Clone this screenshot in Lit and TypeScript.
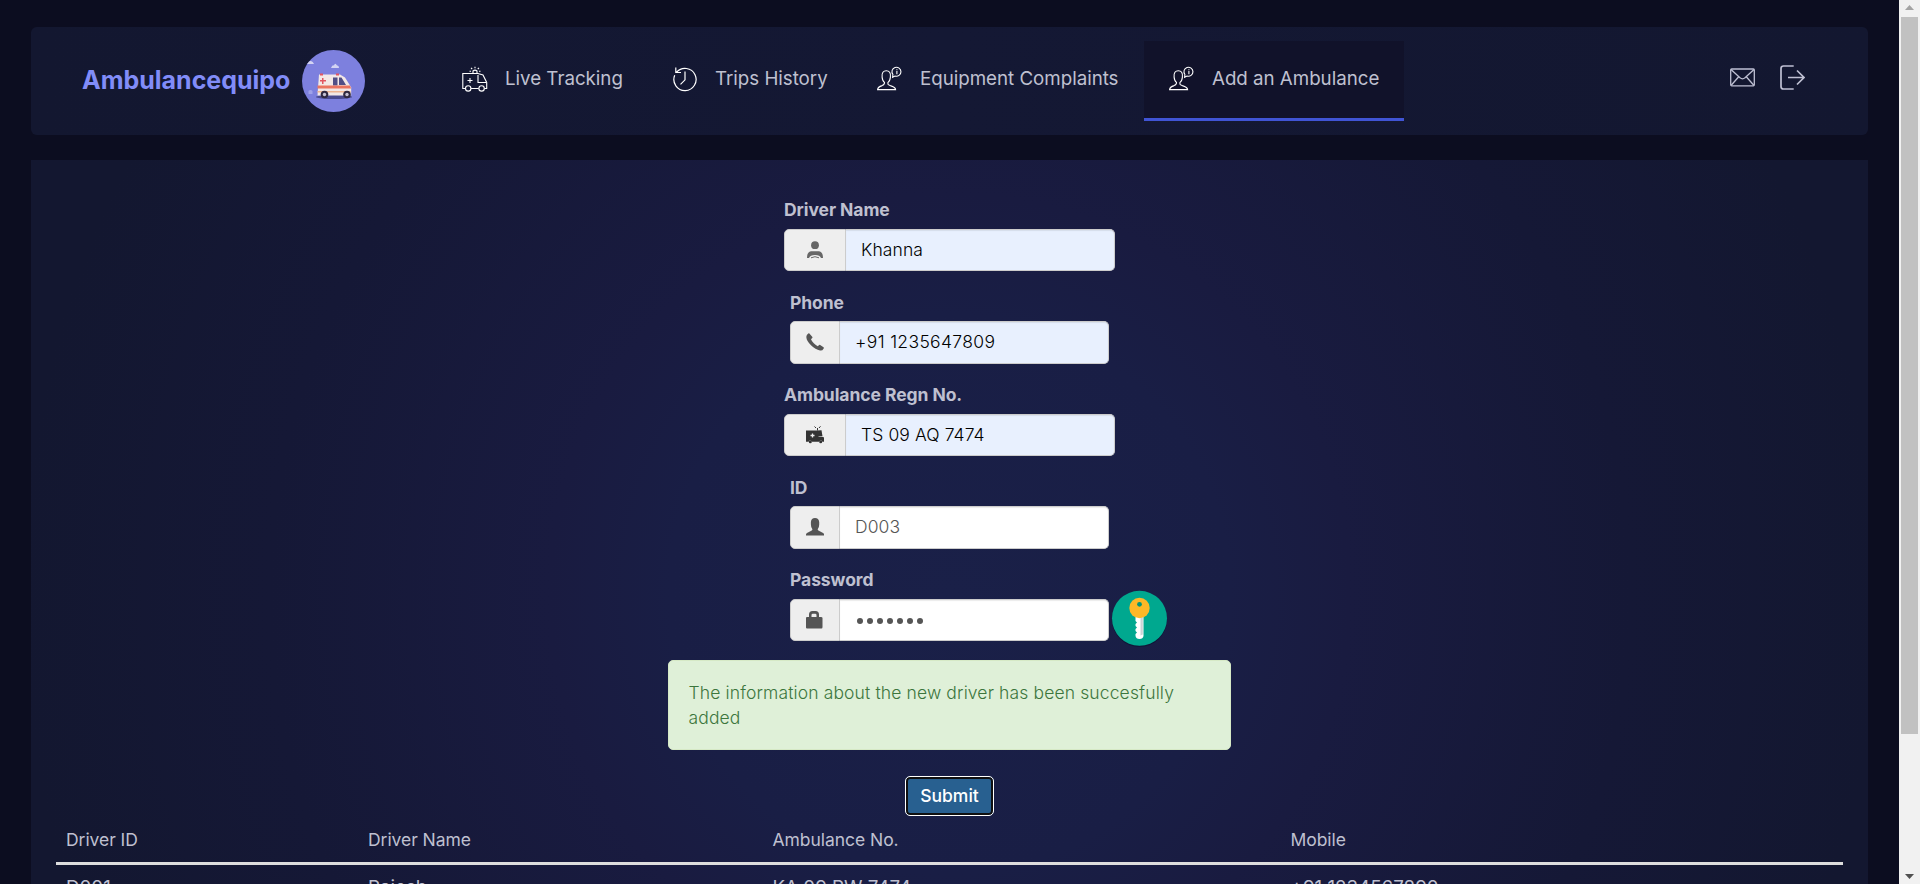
import { LitElement, html, css, svg } from "lit";
import { customElement } from "lit/decorators.js";
import { classMap } from "lit/directives/class-map.js";

const ambulance = html`<svg class="ic" viewBox="0 0 26 30" fill="none" stroke="#fff" stroke-width="1.1">
  <path d="M3.500 22.500H.8V7.500H16l5 1.500 3.700 7.500v6h-2.200M9 22.500h7.700"/>
  <circle cx="6.200" cy="22.400" r="2.700"/><circle cx="19.600" cy="22.400" r="2.700"/>
  <path d="M8 12v5M5.500 14.500h5M16 9v7.500h8M11 7.300V5q2-1.800 4 0v2.300M13 .8v1.500M9 1.800l1.200 1.200M17 1.800l-1.200 1.200M7.500 5.300h1.500M17 5.300h1.500"/></svg>`;
const clock = html`<svg class="ic" viewBox="0 0 26 30" fill="none" stroke="#fff" stroke-width="1.2">
  <path d="M4.600 6.200A11.100 11.100 0 1 1 2.700 9.300M3.800 1.500V6.500H9M13 5.500v8.300L8.500 18.300"/></svg>`;
const person = html`<svg class="ic" viewBox="0 0 26 30" fill="none" stroke="#fff" stroke-width="1.1">
  <path d="M.6 23.600q.2-2.700 4.500-4 2.600-.9 2.400-3.200c-1.600-1-2.200-3.300-2.400-5.300-.5-4.500 1.300-6.300 4.200-6.300s4.600 1.800 4.100 6.300c-.2 2-.8 4.300-2.400 5.300-.3 2.300-.1 2.300 2.300 3.200 4.800 1.400 5.200 2.700 5.300 4z"/>
  <path d="M15.600 11.300l.3-2.800A4.500 4.500 0 1 1 18 10zM19.900 2.900v.9M19.900 4.800v3.400"/></svg>`;

const logo = html`<svg class="logo" viewBox="0 0 63 62">
  <ellipse cx="31.500" cy="31" rx="31.500" ry="31" fill="#7d80de"/>
  <path d="M6 13q1-2.500 3-2t3 3H5zM29.500 17q1-2.500 2.500-1.500 1-3.500 3 0 2-.5 2 2.500h-8z" fill="#d3d4f3"/>
  <path d="M6.500 41q2-2 4 0v3h-4zM10 46h2" fill="#a0a2e9"/>
  <ellipse cx="32" cy="47" rx="18" ry="2" fill="#4a4a8e"/>
  <path d="M17 24.500h21l5 3 5 8 1.200 2v8H15.500z" fill="#f3e8e6"/>
  <path d="M31 27.500h4.500v8H31zM37 27.500h2.500l4.500 7.500h-7z" fill="#514f86"/>
  <path d="M15.500 35.500H48l1.200 3H15.500z" fill="#ea7460"/><path d="M15.500 41h33v1.500h-33z" fill="#efb490"/>
  <path d="M18 23.500h3v2h-3zM34 23.500h3v2h-3zM20 28h1.500v2H24v1.500h-2.500V34H20v-2.500h-2V30h2z" fill="#e25560"/>
  <circle cx="22.500" cy="44.500" r="3.800" fill="#30293f"/><circle cx="45" cy="44.500" r="3.800" fill="#30293f"/>
  <circle cx="22.500" cy="44.500" r="1.700" fill="#c6c1d2"/><circle cx="45" cy="44.500" r="1.700" fill="#c6c1d2"/></svg>`;

const glyphs = {
  driver: svg`<circle cx="9" cy="4.200" r="3.900" fill="#666"/><path d="M1 17q0-6 4-6.700h8q4 .7 4 6.700h-2q-1-3-6-3t-6 3z" fill="#666"/><path d="M5 16.800q4-2.200 8 0" fill="none" stroke="#666"/>`,
  phone: svg`<path d="M3.400.5l3 3.400q.4.500-.2 1.100L5 6.200q.7 2 2.800 4t4 3.100l1.300-1.200q.6-.5 1.100 0l3.300 2.200q.6.500.2 1.100-1.400 2.600-3.700 2.100Q9.500 16.800 5 12.300T.4 4.500Q0 1.800 2.300.4q.6-.4 1.100.1z" fill="#555"/>`,
  van: svg`<path d="M0 4.500h10.500V4.500l5-.3 1 6h-4v.5l5 .3.500 1v3.700h-1.500q-1.500-3-3.500 0H6q-2-3-3.500 0H0z" fill="#333"/><circle cx="4.300" cy="15.700" r="1.500" fill="#333"/><circle cx="14.700" cy="15.700" r="1.500" fill="#333"/><path d="M11.500 4.500V2M8.500.5l1.500 1.500M14.500.3l-1.500 1.700" stroke="#333"/><path d="M6.500 7.500v4M4.500 9.500h4" stroke="#eee" stroke-width="1.300"/>`,
  user: svg`<path d="M0 17.500v-1q0-1 1-1.500l4.700-2.500q.7-.4.700-1.200Q4.900 9.500 4.900 6.500V4Q5.200 0 9 0t4.200 4v2.500q0 3-1.500 4.800 0 .8.700 1.200l4.700 2.500q1 .5 1 1.500v1z" fill="#555"/>`,
  lock: svg`<path d="M3 6V3.500Q3 0 6.500 0h3Q13 0 13 3.500V6h2q1.500 0 1.500 1v9q0 1.500-1 1.500H1q-1 0-1-1V7q0-1 1-1zm2.500 0h5V4q0-1.300-1.300-1.300H6.800Q5.500 2.700 5.500 4z" fill="#555"/>`,
};

const nav = [
  { text: "Live Tracking", icon: ambulance, cls: "n1" },
  { text: "Trips History", icon: clock, cls: "n2" },
  { text: "Equipment Complaints", icon: person, cls: "n3" },
  { text: "Add an Ambulance", icon: person, cls: "active" },
];
const fields = [
  { label: "Driver Name", value: "Khanna", g: glyphs.driver, wide: true, fill: true },
  { label: "Phone", value: "+91 1235647809", g: glyphs.phone, fill: true, tel: true },
  { label: "Ambulance Regn No.", value: "TS 09 AQ 7474", g: glyphs.van, wide: true, fill: true },
  { label: "ID", value: "D003", g: glyphs.user },
  { label: "Password", value: "", g: glyphs.lock, secret: true },
];

@customElement("app-root")
export class AppRoot extends LitElement {
  static styles = css`
    :host { display: flex; width: 1920px; height: 884px; overflow: hidden; font-family: Inter, sans-serif; font-size: 17.5px; line-height: 25px; color: #bfc0d0; }
    * { box-sizing: border-box; }
    svg { display: block; flex: none; }
    .page { width: 1899px; height: 884px; overflow: hidden; padding: 27px 31px 0; background: #0c0d20; }
    .bar { height: 108px; border-radius: 6px; background: linear-gradient(90deg, #131730, #141834 50%, #131730); display: flex; padding: 14px 63px 0 51px; align-items: flex-start; }
    .brand { display: flex; width: 355px; padding-top: 9px; align-items: center; font-size: 25px; font-weight: 700; color: #818cf8; }
    .brand span { width: 220px; white-space: nowrap; padding-bottom: 2px; }
    .logo { width: 63px; height: 62px; }
    .item { height: 80px; display: flex; padding: 0 25px 0 25px; border-bottom: 3px solid transparent; font-size: 18.750px; letter-spacing: -.03px; white-space: nowrap; }
    .item span { padding: 25px 0 0 17px; }
    .n1 { width: 210px; } .n2 { width: 205px; } .n3 { width: 292px; }
    .active { width: 260px; background: #11122a; border-color: #4054d4; }
    .ic { width: 26px; height: 30px; margin-top: 25px; }
    .tools { margin-left: auto; display: flex; gap: 25px; padding-top: 24px; }
    .panel { margin-top: 25px; height: 724px; padding: 0 25px; background: radial-gradient(circle at 50% 60%, #1a2048 0, #191e45 280px, #191b40 400px, #151836 680px, #131730 930px); display: flex; flex-direction: column; }
    .form { flex: none; display: flex; flex-direction: column; align-items: center; padding-top: 36px; }
    .field { width: 319px; height: 92.5px; }
    .field.wide { width: 331px; }
    .label { font-weight: 700; height: 32.500px; padding-top: 1px; white-space: nowrap; letter-spacing: -.07px; }
    .row { display: flex; height: 42.500px; position: relative; }
    .addon { width: 50px; border: 1px solid #ccc; border-radius: 5px 0 0 5px; background: #eee; display: flex; align-items: center; justify-content: center; }
    .wide .addon { width: 62px; }
    .input { flex: 1; border: 1px solid #ccc; border-left: 0; border-radius: 0 5px 5px 0; background: #fff; color: #555; font-weight: 300; letter-spacing: .1px; padding: 7px 15px; box-shadow: inset 0 1px 1px rgba(0,0,0,.08); white-space: nowrap; }
    .input.fill { background: #e8f0fe; color: #000; }
    .input.tel { letter-spacing: .34px; }
    .dots { display: flex; gap: 4px; padding: 11px 2px; }
    .dots i { width: 6px; height: 6px; border-radius: 50%; background: #555; }
    .key { position: absolute; left: 320.500px; top: -9px; }
    .alert { width: 563px; height: 90px; margin-top: 1px; border: 1px solid #d6e9c6; border-radius: 5px; background: #dff0d8; color: #3c763d; font-weight: 300; letter-spacing: .13px; padding: 19px 10px 0 19.500px; }
    .btn { margin-top: 26px; width: 89px; height: 40px; border: 1px solid #fff; border-radius: 5px; background: #286090; color: #fff; font: 500 17.500px/36px Inter, sans-serif; padding: 0; box-shadow: inset 0 0 0 2px #101010; }
    .grid { flex: none; display: grid; grid-template-columns: 302px 404.500px 518px 1fr; font-weight: 400; white-space: nowrap; }
    .head { border-bottom: 3px solid #ddd; height: 49px; padding: 11px 10px 0; letter-spacing: -.05px; }
    .data { padding: 9px 10px 0; font-size: 18.750px; line-height: 27px; }
    .scroll { width: 21px; height: 884px; background: #f1f1f1; display: flex; flex-direction: column; align-items: center; justify-content: space-between; padding-bottom: 4px; }
    .thumb { width: 17px; height: 717px; background: #c1c1c1; margin-bottom: auto; }
    .up { height: 17px; }
  `;
  render() {
    return html`<div class="page">
      <div class="bar">
        <div class="brand"><span>Ambulancequipo</span>${logo}</div>
        ${nav.map((n) => html`<div class="item ${n.cls}">${n.icon}<span>${n.text}</span></div>`)}
        <div class="tools">
          <svg width="25" height="25" viewBox="0 0 25 25" fill="none" stroke="#bfc0d3" stroke-width="1.300"><rect x=".700" y="4" width="23.600" height="16.800" rx="1"/><path d="M1 4.500l9 8.300q2.500 2 5 0l9-8.300M1.200 20.300L8.500 12M23.800 20.300L16.500 12"/></svg>
          <svg width="25" height="25" viewBox="0 0 25 25" fill="none" stroke="#bfc0d3" stroke-width="1.700"><path d="M13.700 1H3.500Q1 1 1 3.500v18Q1 24 3.500 24h10.200M8 12.500h16M17 5.500l7 7-7 7"/></svg>
        </div>
      </div>
      <div class="panel">
        <div class="form">
          ${fields.map((f) => html`<div class=${classMap({ field: true, wide: !!f.wide })}>
            <div class="label">${f.label}</div>
            <div class="row"><div class="addon"><svg width="18" height="18" viewBox="0 0 18 18">${f.g}</svg></div>
              <div class=${classMap({ input: true, fill: !!f.fill, tel: !!f.tel })}>${f.secret ? html`<div class="dots">${Array.from({ length: 7 }, () => html`<i></i>`)}</div>` : f.value}</div>
              ${f.secret ? html`<svg class="key" width="57" height="58" viewBox="0 0 57 58"><circle cx="28.500" cy="29.500" r="27.500" fill="#0a1030" opacity=".6"/><circle cx="28.500" cy="28.300" r="27.500" fill="#00a88f"/><path d="M24.500 26h8v20q-.5 3-4 3t-4-3v-2l1.500-1.500-1.500-1.500v-2l1.500-1.500-1.500-1.500v-2l1.500-1.500-1.500-1.500z" fill="#fff"/><path d="M29.500 27h2.300v17.500l-2.300 1z" fill="#ccd3d6"/><circle cx="28.500" cy="18" r="10.200" fill="#fdb827"/><circle cx="28.500" cy="14.300" r="2.400" fill="#00957c"/></svg>` : ""}
            </div></div>`)}
          <div class="alert">The information about the new driver has been succesfully added</div>
          <button class="btn">Submit</button>
        </div>
        <div class="grid head"><span>Driver ID</span><span>Driver Name</span><span>Ambulance No.</span><span>Mobile</span></div>
        <div class="grid data"><span>D001</span><span>Rajesh</span><span>KA 09 RW 7474</span><span>+91 1234567890</span></div>
      </div>
    </div>
    <div class="scroll">
      <svg class="up" width="9" height="17" viewBox="0 0 9 17"><path d="M0 10l4.500-5L9 10z" fill="#a3a3a3"/></svg>
      <div class="thumb"></div>
      <svg width="9" height="6" viewBox="0 0 9 6"><path d="M0 0h9L4.500 5z" fill="#505050"/></svg>
    </div>`;
  }
}
